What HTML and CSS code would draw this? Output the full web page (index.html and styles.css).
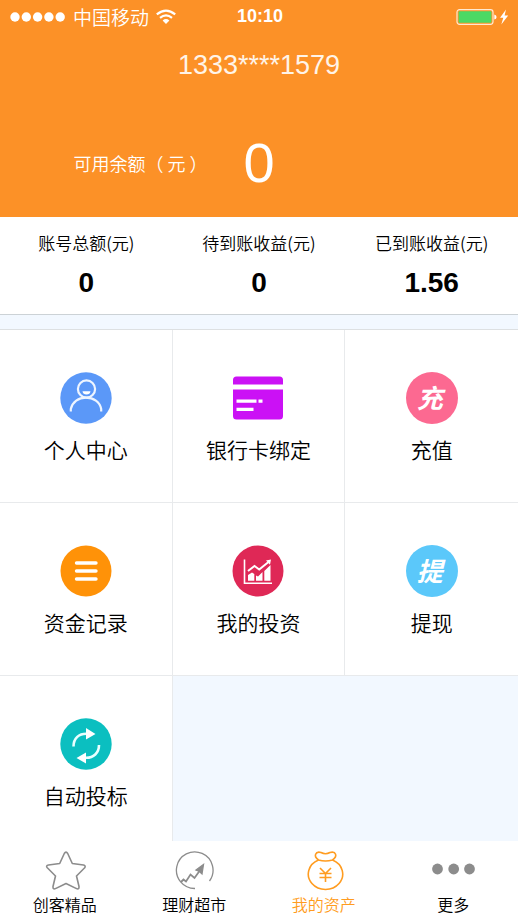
FILE: index.html
```html
<!DOCTYPE html>
<html lang="zh-CN">
<head>
<meta charset="utf-8">
<meta name="viewport" content="width=device-width, initial-scale=1">
<title>我的资产</title>
<link rel="stylesheet" href="styles.css">
</head>
<body>
<div class="app">
  <header class="hero">
    <div class="status">
      <div class="carrier">
        <svg width="56" height="12" viewBox="0 0 56 12" fill="#fff" aria-hidden="true"><circle cx="5" cy="6" r="4.7"/><circle cx="16.3" cy="6" r="4.7"/><circle cx="27.6" cy="6" r="4.7"/><circle cx="38.9" cy="6" r="4.7"/><circle cx="50.2" cy="6" r="4.7"/></svg>
        <span>中国移动</span>
        <svg width="20" height="16" viewBox="0 0 20 16" fill="none" stroke="#fff" stroke-width="2.2" aria-hidden="true"><path d="M.8 5.4Q10-2.2 19.2 5.4M4 8.9Q10 3.9 16 8.9"/><path d="M6.6 11.4Q10 8.6 13.4 11.4L10 15z" fill="#fff" stroke="none"/></svg>
      </div>
      <time class="clock">10:10</time>
      <svg class="battery" width="54" height="18" viewBox="0 0 54 18" aria-hidden="true"><rect x="1" y="1.7" width="36" height="14.6" rx="2.5" fill="none" stroke="#ffe9d0" stroke-width="1.2"/><rect x="2.6" y="3.2" width="32.8" height="11.6" rx="1" fill="#4cd964"/><path d="M38.3 6.5Q40.6 7 40.6 9T38.3 11.5z" fill="#fff"/><path d="M50 1.5L44 9.8H47.3L45.3 16.5 52.2 7.6H48.6z" fill="#fff"/></svg>
    </div>
    <h1 class="phone">1333****1579</h1>
    <div class="balance">
      <span class="balance-label">可用余额（ 元 ）</span>
      <strong class="balance-value">0</strong>
    </div>
  </header>

  <main class="content">
    <dl class="summary">
      <div><dt>账号总额(元)</dt><dd>0</dd></div>
      <div><dt>待到账收益(元)</dt><dd>0</dd></div>
      <div><dt>已到账收益(元)</dt><dd>1.56</dd></div>
    </dl>
    <nav class="tiles" aria-label="功能">
      <a class="tile" href="#profile">
        <svg class="icon" viewBox="0 0 52 52" fill="none" aria-hidden="true"><circle cx="26" cy="26" r="25.7" fill="#5b98f8"/><g stroke="#eef5ff" stroke-width="2.2"><circle cx="26.500" cy="17" r="8.6"/><path d="M10.800 39.5V37C12.500 30 18.500 25.7 26 25.7S39.800 30 41.200 37V39.500"/></g><path d="M22.500 19.300H30.500Q30 22.500 26.500 22.500T22.500 19.300" fill="#fff"/></svg>
        <span>个人中心</span>
      </a>
      <a class="tile" href="#card">
        <svg class="icon" viewBox="0 0 52 52" aria-hidden="true"><path d="M1 12.500V8Q1 4.500 4.500 4.500H47.500Q51 4.500 51 8V12.500zM1 17.500H51V44Q51 47.500 47.500 47.500H4.500Q1 47.500 1 44z" fill="#cb11f5"/><path d="M4.500 27.500H24.500V30.700H4.500zM26.500 27.500H30.500V30.700H26.500zM4.500 35.700H21.500V39H4.500z" fill="#fff"/></svg>
        <span>银行卡绑定</span>
      </a>
      <a class="tile" href="#recharge">
        <span class="icon badge pink">充</span>
        <span>充值</span>
      </a>
      <a class="tile" href="#records">
        <svg class="icon" viewBox="0 0 52 52" aria-hidden="true"><circle cx="26" cy="26" r="25.500" fill="#ff9208"/><path d="M16.500 18H36M16.500 26H36M16.500 34H36" stroke="#fff" stroke-width="3.400" stroke-linecap="round"/></svg>
        <span>资金记录</span>
      </a>
      <a class="tile" href="#investments">
        <svg class="icon" viewBox="0 0 52 52" fill="none" aria-hidden="true"><circle cx="26" cy="26" r="25.500" fill="#df2856"/><path d="M12.500 14.500V38.200H40" stroke="#fff" stroke-width="1.600"/><path d="M16 30L20 27.500 22.300 29V35.800H16zM24 30.500L26 31.500 30.500 27V35.800H24zM32.300 26L38.500 20V35.800H32.300z" fill="#fff"/><path d="M16 26L22.500 21 27.200 24.500 36.500 17" stroke="#fff" stroke-width="2"/><path d="M34 15.500L39 14.500 38 19.700z" fill="#fff"/></svg>
        <span>我的投资</span>
      </a>
      <a class="tile" href="#withdraw">
        <span class="icon badge blue">提</span>
        <span>提现</span>
      </a>
      <a class="tile" href="#auto">
        <svg class="icon" viewBox="0 0 52 52" fill="none" aria-hidden="true"><circle cx="26" cy="26" r="25.700" fill="#0bbfc0"/><path d="M13.500 28.500C13.500 20 19 15.500 27 15.800M39 27C39 35 33.500 40 25.500 39.700" stroke="#e9ffff" stroke-width="2.600"/><path d="M26 10L35.500 16 26 21.500zM26 34.500V45.500L16.500 40z" fill="#fff"/></svg>
        <span>自动投标</span>
      </a>
    </nav>
  </main>

  <nav class="tabs" aria-label="主导航">
    <a class="tab" href="#featured">
      <svg width="42" height="42" viewBox="0 0 42 42" fill="none" stroke="#8c8c8c" stroke-width="1.600" stroke-linejoin="round" aria-hidden="true"><path d="M20.300 3.500Q22 .8 23.700 3.500L28.300 13.500 39.500 15Q42 15.500 40.700 17.800L32.500 26 35 36.500Q35.200 39.800 32.500 38.600L22 33.500 11.500 38.600Q8.800 39.800 9 36.500L11.500 26 3.300 17.800Q1.500 15.500 4.500 15L15.700 13.500z"/></svg>
      <span>创客精品</span>
    </a>
    <a class="tab" href="#market">
      <svg width="42" height="42" viewBox="0 0 42 42" fill="none" stroke="#8c8c8c" stroke-width="1.300" aria-hidden="true"><path d="M22 38.500A18.300 18.300 0 1 1 36.500 31"/><path d="M8 32L10.500 29.500 13 31.500 17.500 24.500 21.500 28 26.500 21" stroke-width="1.800"/><path d="M23 20L30.500 14.500 29 24 26.500 21.500z" fill="#8c8c8c"/></svg>
      <span>理财超市</span>
    </a>
    <a class="tab active" href="#assets" aria-current="page">
      <svg width="42" height="42" viewBox="0 0 42 42" fill="none" stroke="#ff9c20" stroke-width="1.600" stroke-linejoin="round" aria-hidden="true"><path d="M15.500 10A17.200 15.400 0 1 0 29.500 10"/><path d="M15.500 10C10 6 12.500 1 18 2.500Q22.500 5 27 2.500C33 1 35 6 29.500 10Q22.500 12 15.500 10z"/><path d="M17 18L22.500 23.500 28 18M16.500 23.500H28.500M16.500 27.500H28.500M22.500 23.500V32"/></svg>
      <span>我的资产</span>
    </a>
    <a class="tab" href="#more">
      <svg width="44" height="42" viewBox="0 0 44 42" fill="#8c8c8c" aria-hidden="true"><circle cx="6.500" cy="19" r="5.400"/><circle cx="22.700" cy="19" r="5.400"/><circle cx="38.500" cy="19" r="5.400"/></svg>
      <span>更多</span>
    </a>
  </nav>
</div>
</body>
</html>
```
FILE: styles.css
```css
* {
  box-sizing: border-box;
}

body {
  margin: 0;
  background: #f2f8ff;
  color: #000;
  font-family: "Liberation Sans", "Noto Sans CJK SC", sans-serif;
}

a {
  color: inherit;
  text-decoration: none;
}

.app {
  display: flex;
  flex-direction: column;
  height: 100vh;
}

.hero {
  flex: none;
  padding-bottom: 22px;
  background: #fc9127;
  color: #fff;
}

.status {
  display: grid;
  grid-template-columns: 1fr auto 1fr;
  align-items: center;
  height: 33px;
  padding: 0 8px 0 10px;
}

.carrier {
  display: flex;
  align-items: center;
  gap: 7px;
  font-size: 19px;
  font-weight: 350;
  font-family: "Noto Sans CJK SC", sans-serif;
  line-height: 32px;
}

.clock {
  font-size: 18px;
  font-weight: bold;
}

.battery {
  justify-self: end;
}

.phone {
  margin: 14px 0 0;
  color: #fff4e8;
  font-size: 27px;
  font-weight: normal;
  line-height: 36px;
  text-align: center;
}

.balance {
  display: grid;
  grid-template-columns: 1fr auto 1fr;
  align-items: center;
  height: 64px;
  margin-top: 48px;
}

.balance-label {
  justify-self: end;
  padding-right: 36px;
  font: 350 18px/28px "Noto Sans CJK SC", sans-serif;
}

.balance-value {
  font-size: 56px;
  font-weight: normal;
  line-height: 64px;
}

.content {
  flex: 1;
  min-height: 0;
  overflow-y: auto;
  scrollbar-width: none;
}

.summary {
  display: grid;
  grid-template-columns: repeat(3, 1fr);
  height: 98px;
  margin: 0 0 14px;
  padding-top: 12px;
  border-bottom: 1px solid #ccd2d6;
  background: #fff;
  text-align: center;
}

.summary dt {
  font: 350 17px/28px "Noto Sans CJK SC", sans-serif;
}

.summary dd {
  margin: 8px 0 0;
  font-size: 28px;
  font-weight: bold;
  line-height: 36px;
}

.tiles {
  display: grid;
  grid-template-columns: repeat(3, 1fr);
  border-top: 1px solid #dde0e2;
}

.tile {
  display: flex;
  flex-direction: column;
  align-items: center;
  gap: 9px;
  height: 173px;
  padding-top: 42px;
  border-right: 1px solid #e8eaec;
  border-bottom: 1px solid #e8eaec;
  background: #fff;
  font: 350 21px/32px "Noto Sans CJK SC", sans-serif;
}

.tile:nth-child(3n) {
  border-right: 0;
}

.icon {
  flex: none;
  width: 52px;
  height: 52px;
}

.badge {
  padding-right: 4px;
  border-radius: 50%;
  color: #fff;
  font-size: 26px;
  font-style: italic;
  font-weight: bold;
  line-height: 50px;
  text-align: center;
}

.pink {
  background: #fc6991;
}

.blue {
  background: #5bc8fa;
}

.tabs {
  display: grid;
  flex: none;
  grid-template-columns: repeat(4, 1fr);
  height: 79px;
  padding-top: 9px;
  background: #fff;
}

.tab {
  display: flex;
  flex-direction: column;
  align-items: center;
  font: 350 16px/24px "Noto Sans CJK SC", sans-serif;
}

.active {
  color: #ff9c20;
}
```
